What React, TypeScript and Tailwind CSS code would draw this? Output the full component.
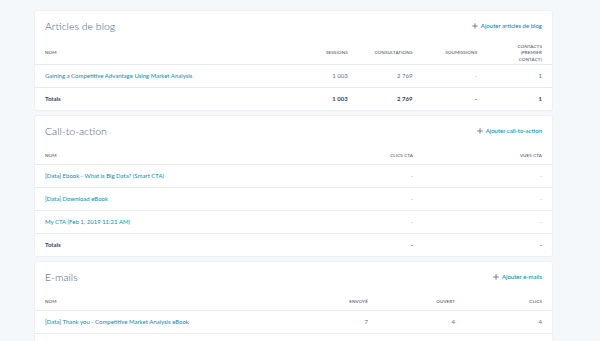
import React from 'react';

type Row = { name: string; values: string[]; total?: boolean };

interface CardProps {
  title: string;
  addLabel: string;
  cols: string;
  headers: React.ReactNode[];
  headerH: string;
  rows: Row[];
  trailing?: boolean;
}

const Plus = () => (
  <svg width="6" height="6" viewBox="0 0 10 10" className="shrink-0">
    <path d="M5 0.5v9M0.5 5h9" stroke="#516f90" strokeWidth="1.4" />
  </svg>
);

const Card: React.FC<CardProps> = ({ title, addLabel, cols, headers, headerH, rows, trailing }) => (
  <div className="bg-white rounded-[2px] shadow-[0_0_0_1px_#edf1f5,0_1px_2px_rgba(45,62,80,0.06)]">
    <div className="h-[30px] flex items-center justify-between px-[10px]">
      <h2 className="text-[10.5px] font-light text-[#425b76] leading-none">{title}</h2>
      <button className="flex items-center gap-[3px] text-[6px] text-[#0091ae] font-medium leading-none">
        <Plus />
        {addLabel}
      </button>
    </div>
    <div className={`grid ${cols} ${headerH} items-center px-[10px] text-[4.6px] uppercase text-[#33475b] leading-[6.5px] tracking-[0.02em]`}>
      <div>Nom</div>
      {headers.map((h, i) => (
        <div key={i} className="text-right text-[#33475b]">{h}</div>
      ))}
    </div>
    {rows.map((r, i) => (
      <div
        key={i}
        className={`grid ${cols} h-[23px] items-center px-[10px] border-t border-[#e5ebf1] text-[6px] leading-none`}
      >
        <div className={r.total ? 'font-bold text-[#33475b]' : 'text-[#0091ae]'}>{r.name}</div>
        {r.values.map((v, j) => (
          <div
            key={j}
            className={`text-right ${r.total ? 'font-bold text-[#33475b]' : v === '-' ? 'text-[#99acc2]' : 'text-[#516f90]'}`}
          >
            {v}
          </div>
        ))}
      </div>
    ))}
    {trailing && <div className="h-[23px] border-t border-[#e5ebf1]" />}
  </div>
);

export default function App() {
  return (
    <div className="w-[600px] h-[341px] overflow-hidden bg-[#f5f8fa] font-['Lato',sans-serif]">
      <div className="ml-[35px] w-[517px] pt-[11px] flex flex-col gap-[6px]">
        <Card
          title="Articles de blog"
          addLabel="Ajouter articles de blog"
          cols="grid-cols-[238px_1fr_1fr_1fr_1fr]"
          headerH="h-[23px]"
          headers={[
            'Sessions',
            'Consultations',
            'Soumissions',
            <span key="c">Contacts<br />(premier<br />contact)</span>,
          ]}
          rows={[
            { name: 'Gaining a Competitive Advantage Using Market Analysis', values: ['1 003', '2 769', '-', '1'] },
            { name: 'Totals', values: ['1 003', '2 769', '-', '1'], total: true },
          ]}
        />
        <Card
          title="Call-to-action"
          addLabel="Ajouter call-to-action"
          cols="grid-cols-[239px_1fr_1fr]"
          headerH="h-[18px]"
          headers={['Clics CTA', 'Vues CTA']}
          rows={[
            { name: '[Data] Ebook - What is Big Data? (Smart CTA)', values: ['-', '-'] },
            { name: '[Data] Download eBook', values: ['-', '-'] },
            { name: 'My CTA (Feb 1, 2019 11:21 AM)', values: ['-', '-'] },
            { name: 'Totals', values: ['-', '-'], total: true },
          ]}
        />
        <Card
          title="E-mails"
          addLabel="Ajouter e-mails"
          cols="grid-cols-[236px_1fr_1fr_1fr]"
          headerH="h-[18px]"
          headers={['Envoyé', 'Ouvert', 'Clics']}
          rows={[
            { name: '[Data] Thank you - Competitive Market Analysis eBook', values: ['7', '4', '4'] },
          ]}
          trailing
        />
      </div>
    </div>
  );
}
